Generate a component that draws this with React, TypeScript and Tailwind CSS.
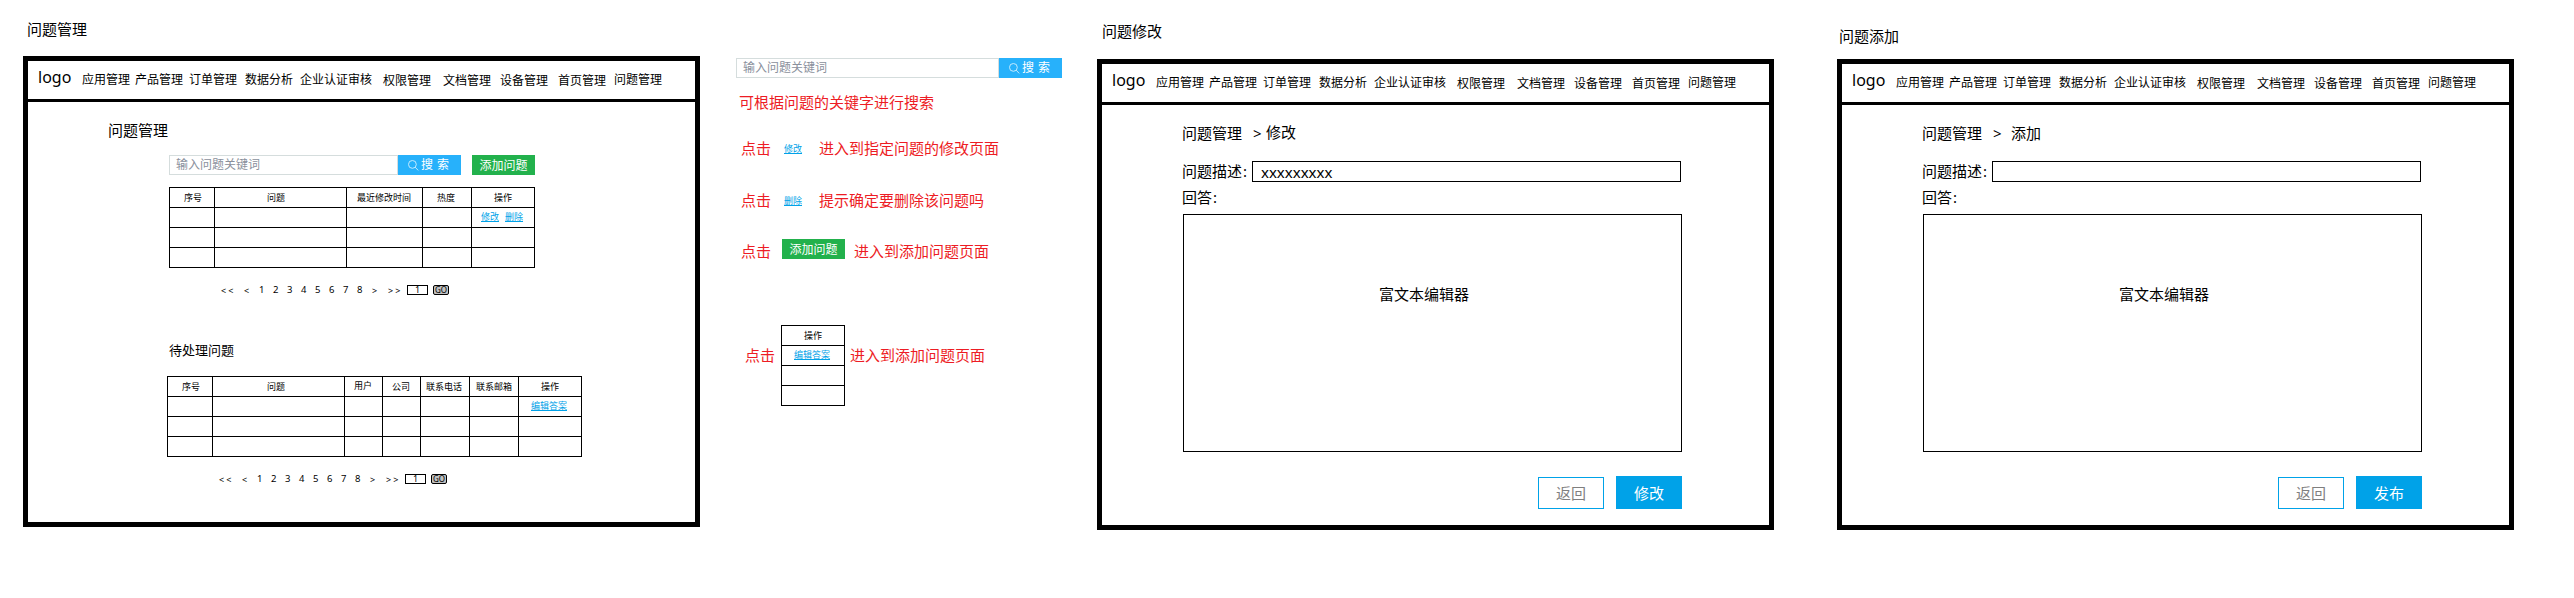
import React from "react";

type NavItem = { label: string; box: string };

const NAV: NavItem[] = [
  { label: "应用管理", box: "w-[53px] leading-[38px]" },
  { label: "产品管理", box: "w-[54px] leading-[38px]" },
  { label: "订单管理", box: "w-[56px] leading-[38px]" },
  { label: "数据分析", box: "w-[55px] leading-[38px]" },
  { label: "企业认证审核", box: "w-[83px] leading-[38px]" },
  { label: "权限管理", box: "w-[60px] leading-[40px]" },
  { label: "文档管理", box: "w-[57px] leading-[40px]" },
  { label: "设备管理", box: "w-[58px] leading-[40px]" },
  { label: "首页管理", box: "w-[56px] leading-[40px]" },
  { label: "问题管理", box: "w-[50px] leading-[38px]" },
];

function Frame({ children }: { children: React.ReactNode }) {
  return (
    <section className="flex h-[471px] w-[677px] flex-col border-5 border-black">
      <nav className="flex h-[41px] shrink-0 items-start border-b-3 border-black text-xs">
        <span className="w-[54px] pl-[10px] text-base leading-[32px]">logo</span>
        {NAV.map((n) => (
          <a key={n.label} className={n.box}>
            {n.label}
          </a>
        ))}
      </nav>
      {children}
    </section>
  );
}

function SearchBar({ width }: { width: string }) {
  return (
    <div className="flex h-5">
      <div className={`${width} border border-[#d5dddd] pl-[6px] text-xs leading-[18px] text-[#8a909c]`}>
        输入问题关键词
      </div>
      <button className="flex w-[63px] items-center bg-[#27b1fb] pl-[10px] text-xs leading-5 text-white">
        <svg className="mr-[2px] h-[11px] w-[11px]" viewBox="0 0 11 11" fill="none" stroke="#d4effe" strokeWidth="0.9">
          <circle cx="4.4" cy="4.4" r="3.9" />
          <path d="M7.2 7.2 10.2 10.4" />
        </svg>
        <span className="[word-spacing:1px]">搜 索</span>
      </button>
    </div>
  );
}

function AddButton() {
  return <button className="h-5 w-[63px] bg-[#22b14c] text-center text-xs leading-[21px] text-white">添加问题</button>;
}

function Link({ children }: { children: React.ReactNode }) {
  return <a className="text-[9px] text-[#00a2e8] underline">{children}</a>;
}

type Column = { label: string; pad: string; action?: React.ReactNode };

function Table({ cols, grid }: { cols: Column[]; grid: string }) {
  return (
    <div className={`grid ${grid} auto-rows-[20px] border-t border-l border-black text-[9px] leading-[20px]`}>
      {cols.map((c) => (
        <div key={c.label} className={`border-r border-b border-black whitespace-nowrap ${c.pad}`}>
          {c.label}
        </div>
      ))}
      {[0, 1, 2].map((r) =>
        cols.map((c) => (
          <div key={c.label + r} className="border-r border-b border-black leading-[18px] whitespace-nowrap">
            {r === 0 ? c.action : null}
          </div>
        )),
      )}
    </div>
  );
}

const EDIT_ANSWER = (
  <div className="pl-[12px]">
    <Link>编辑答案</Link>
  </div>
);

const QUESTION_COLS: Column[] = [
  { label: "序号", pad: "pl-[14px]" },
  { label: "问题", pad: "pl-[52px]" },
  { label: "最近修改时间", pad: "pl-[10px]" },
  { label: "热度", pad: "pl-[14px]" },
  {
    label: "操作",
    pad: "pl-[22px]",
    action: (
      <div className="flex gap-[6px] pl-[9px]">
        <Link>修改</Link>
        <Link>删除</Link>
      </div>
    ),
  },
];

const PENDING_COLS: Column[] = [
  { label: "序号", pad: "pl-[14px]" },
  { label: "问题", pad: "pl-[54px]" },
  { label: "用户", pad: "pl-[9px] leading-[18px]" },
  { label: "公司", pad: "pl-[9px]" },
  { label: "联系电话", pad: "pl-[5px]" },
  { label: "联系邮箱", pad: "pl-[6px]" },
  { label: "操作", pad: "pl-[22px]", action: EDIT_ANSWER },
];

const ACTION_COLS: Column[] = [{ label: "操作", pad: "pl-[22px]", action: EDIT_ANSWER }];

function Pagination() {
  return (
    <div className="flex h-[10px] text-[9.5px] leading-[10px]">
      <span className="w-6 pl-px text-[9px] leading-[11px] tracking-[2px]">&lt;&lt;</span>
      <span className="w-[15px] text-[9px] leading-[11px]">&lt;</span>
      {[1, 2, 3, 4, 5, 6, 7, 8].map((n) => (
        <span key={n} className="w-[14px]">
          {n}
        </span>
      ))}
      <span className="w-4 pl-px text-[9px] leading-[11px]">&gt;</span>
      <span className="w-5 pl-px text-[9px] leading-[11px] tracking-[2px]">&gt;&gt;</span>
      <span className="mr-[5px] flex w-[21px] items-center justify-center border border-black text-[9px] leading-[8px]">
        1
      </span>
      <span className="flex w-4 items-center justify-center rounded-[2px] border border-black bg-[#c0c0c0] text-[8px] leading-[8px]">
        GO
      </span>
    </div>
  );
}

function ListPage() {
  return (
    <Frame>
      <h2 className="mt-[18px] mb-px pl-[80px] text-[15px] leading-5">问题管理</h2>
      <div className="mt-[14px] ml-[141px] flex gap-[11px]">
        <SearchBar width="w-[229px]" />
        <AddButton />
      </div>
      <div className="mt-3 ml-[141px] w-[366px]">
        <Table cols={QUESTION_COLS} grid="grid-cols-[45px_132px_76px_49px_63px]" />
      </div>
      <div className="mt-[17px] ml-[192px]">
        <Pagination />
      </div>
      <h3 className="mt-[45px] mb-px ml-[141px] text-[13px] leading-5">待处理问题</h3>
      <div className="mt-[15px] ml-[139px] w-[415px]">
        <Table cols={PENDING_COLS} grid="grid-cols-[45px_132px_38px_38px_49px_49px_63px]" />
      </div>
      <div className="mt-[17px] ml-[190px]">
        <Pagination />
      </div>
    </Frame>
  );
}

function Notes() {
  return (
    <aside className="flex w-[361px] flex-col pt-[58px] text-[15px] leading-5 text-[#ed1c24]">
      <SearchBar width="w-[263px]" />
      <p className="mt-[14px] mb-px pl-[3px]">可根据问题的关键字进行搜索</p>
      <p className="mt-[25px] mb-px flex h-5 pl-[5px]">
        <span className="w-[43px]">点击</span>
        <span className="w-[35px] text-[9px] leading-[21px]">
          <Link>修改</Link>
        </span>
        <span>进入到指定问题的修改页面</span>
      </p>
      <p className="mt-[31px] mb-px flex h-5 pl-[5px]">
        <span className="w-[43px]">点击</span>
        <span className="w-[35px] text-[9px] leading-[21px]">
          <Link>删除</Link>
        </span>
        <span>提示确定要删除该问题吗</span>
      </p>
      <div className="mt-[28px] flex h-5 pl-[5px]">
        <span className="w-[41px] leading-[25px]">点击</span>
        <AddButton />
        <span className="ml-[9px] leading-[25px]">进入到添加问题页面</span>
      </div>
      <div className="mt-[66px] flex pl-[9px]">
        <span className="mt-5 w-[36px]">点击</span>
        <div className="w-16 text-black">
          <Table cols={ACTION_COLS} grid="grid-cols-[63px]" />
        </div>
        <span className="mt-5 ml-[5px]">进入到添加问题页面</span>
      </div>
    </aside>
  );
}

function FormPage({ crumb, crumbBox, value, submit }: { crumb: string; crumbBox: string; value: string; submit: string }) {
  return (
    <Frame>
      <div className="mt-[18px] mb-px flex h-5 pl-[80px] text-[15px] leading-5">
        <span className="w-[71px]">问题管理</span>
        <span className="w-[13px]">&gt;</span>
        <span className={crumbBox}>{crumb}</span>
      </div>
      <div className="mt-[17px] flex h-[21px] pl-[80px] text-[15px] leading-[21px]">
        <span className="w-[70px]">
          问题描述<span className="pl-px">:</span>
        </span>
        <div className="w-[429px] border border-black pl-2 leading-[20px]">{value}</div>
      </div>
      <p className="mt-[5px] mb-px pl-[80px] text-[15px] leading-5">
        回答<span className="pl-px">:</span>
      </p>
      <div className="mt-[6px] ml-[81px] h-[238px] w-[499px] border border-black pt-[69px] pl-[195px] text-[15px] leading-5">
        富文本编辑器
      </div>
      <div className="mt-6 ml-[436px] flex items-end gap-3 text-center text-[15px]">
        <button className="h-8 w-[66px] border border-[#00a2e8] leading-[30px] text-[#7f7f7f]">返回</button>
        <button className="h-[33px] w-[66px] bg-[#00a2e8] leading-[32px] text-white">{submit}</button>
      </div>
    </Frame>
  );
}

export default function App() {
  return (
    <main className="flex h-[598px] w-[2574px] items-start overflow-hidden bg-white font-['Noto_Sans','Noto_Sans_CJK_SC',sans-serif] text-black">
      <div className="w-[736px] shrink-0 pt-[19px] pl-[23px]">
        <h1 className="mb-[17px] pl-[4px] text-[15px] leading-5">问题管理</h1>
        <ListPage />
      </div>
      <Notes />
      <div className="w-[740px] shrink-0 pt-[21px]">
        <h1 className="mb-[18px] pl-[5px] text-[15px] leading-5">问题修改</h1>
        <FormPage crumb="修改" crumbBox="leading-[19px]" value="xxxxxxxxx" submit="修改" />
      </div>
      <div className="w-[677px] shrink-0 pt-[26px]">
        <h1 className="mb-[13px] pl-[2px] text-[15px] leading-5">问题添加</h1>
        <FormPage crumb="添加" crumbBox="ml-[5px]" value="" submit="发布" />
      </div>
    </main>
  );
}
